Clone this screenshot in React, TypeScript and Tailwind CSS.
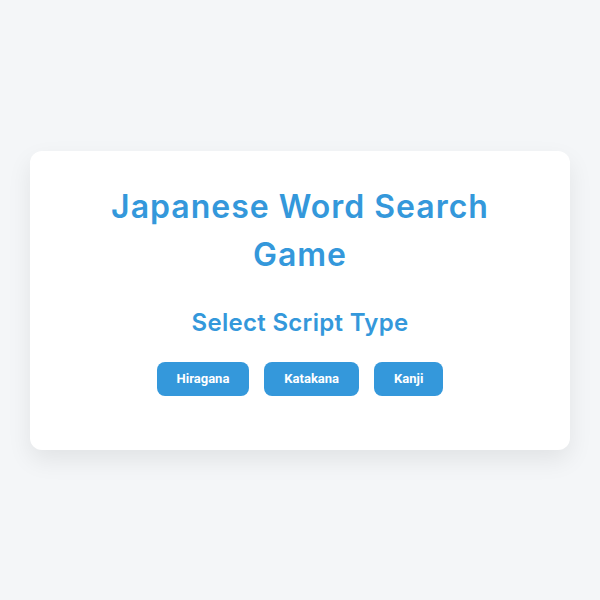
import React from "react";

export default function App() {
  return (
    <div className="min-h-screen w-full bg-[#f4f6f8] flex items-center justify-center" style={{ fontFamily: "Roboto, 'Liberation Sans', sans-serif" }}>
      <div className="w-[540px] bg-white rounded-xl shadow-[0_10px_25px_rgba(0,0,0,0.08)] px-8 pt-8 pb-[54px] flex flex-col items-center text-center">
        <h1 className="text-[32px] leading-[48px] font-semibold text-[#3498db] w-[420px] tracking-[1px]" style={{ fontFamily: "Inter, 'Noto Sans', sans-serif" }}>
          Japanese Word Search Game
        </h1>
        <h2 className="mt-[26px] text-[24px] leading-[36px] font-semibold text-[#3498db] tracking-[0.3px]" style={{ fontFamily: "Inter, 'Noto Sans', sans-serif" }}>
          Select Script Type
        </h2>
        <div className="mt-[21px] flex gap-[15px]">
          {["Hiragana", "Katakana", "Kanji"].map((t) => (
            <button key={t} className="bg-[#3498db] text-white font-bold text-[13px] leading-4 px-5 py-[9px] rounded-lg">
              {t}
            </button>
          ))}
        </div>
      </div>
    </div>
  );
}
